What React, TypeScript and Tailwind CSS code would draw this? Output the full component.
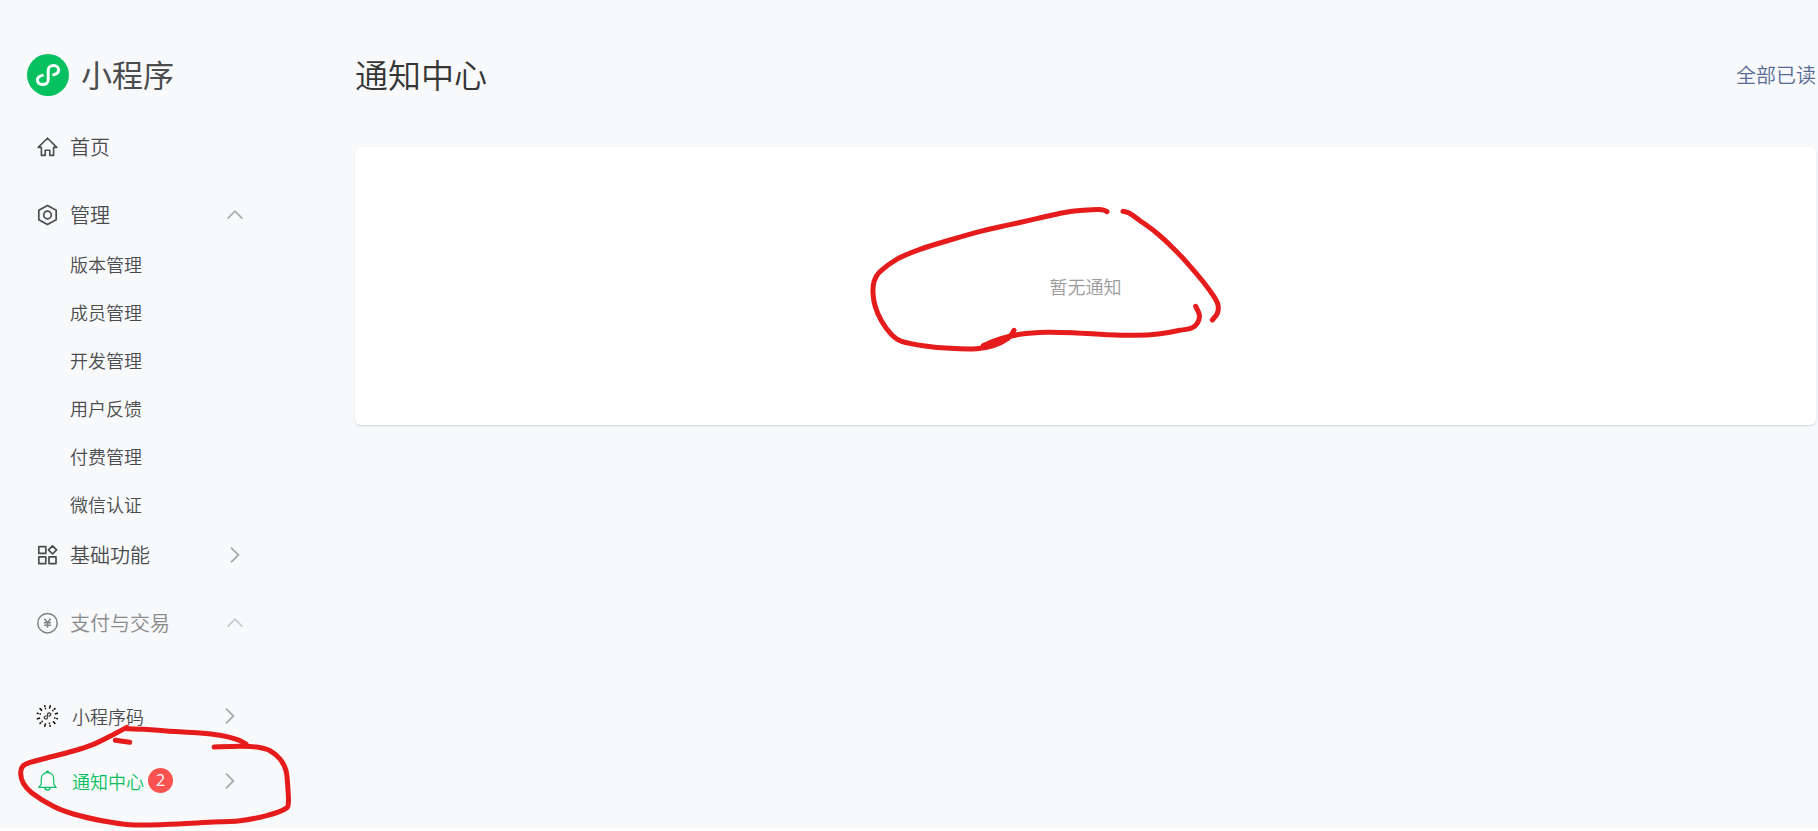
import React from 'react';

const subItems = ['版本管理', '成员管理', '开发管理', '用户反馈', '付费管理', '微信认证'];

type Point = [number, number];

// Smooth curve through the given points
const smoothPath = (points: Point[]) => {
    let d = `M${points[0][0]} ${points[0][1]}`;
    for (let i = 0; i < points.length - 1; i++) {
        const p0 = points[i - 1] || points[i];
        const p1 = points[i];
        const p2 = points[i + 1];
        const p3 = points[i + 2] || p2;
        d += `C${p1[0] + (p2[0] - p0[0]) / 6} ${p1[1] + (p2[1] - p0[1]) / 6} ${p2[0] - (p3[0] - p1[0]) / 6} ${p2[1] - (p3[1] - p1[1]) / 6} ${p2[0]} ${p2[1]}`;
    }
    return d;
};

const noticeStrokes: Point[][] = [
    [[771, 65], [755, 59], [700, 61], [640, 68], [560, 86], [480, 104], [400, 122], [300, 150], [210, 178], [140, 208], [88, 247], [72, 275], [69, 310], [76, 350], [95, 394], [125, 434], [155, 454], [225, 468], [300, 475], [380, 476], [430, 467], [475, 444], [492, 421]],
    [[400, 467], [450, 447], [510, 433], [590, 427], [680, 429], [770, 434], [860, 436], [930, 431], [990, 421], [1025, 414], [1043, 398], [1048, 375], [1037, 349]],
    [[819, 64], [837, 69], [870, 92], [920, 129], [965, 170], [1010, 217], [1060, 276], [1092, 320], [1104, 345], [1102, 370], [1087, 390]],
];

const entryStrokes: Point[][] = [
    [[738, 672], [710, 658], [660, 646], [600, 639], [500, 633], [430, 628], [380, 626]],
    [[380, 622], [330, 649], [280, 673], [220, 693], [140, 714], [88, 728], [68, 739], [62, 760], [70, 790], [95, 818], [160, 859], [220, 882], [310, 903], [390, 914], [480, 914], [600, 908], [720, 902], [800, 887], [855, 867], [865, 850], [864, 810], [858, 752], [840, 717], [810, 692], [770, 681], [720, 679], [642, 681]],
    [[346, 661], [389, 667]],
];

const Chevron: React.FC<{ up?: boolean; className?: string }> = ({ up, className = '' }) => (
    <svg className={`w-4 h-4 ml-auto ${className}`} viewBox="0 0 16 16" fill="none" stroke="#a9abad" strokeWidth={1.8} aria-hidden="true">
        {up ? <path d="M0.6 11.6L8 4.2L15.4 11.6" /> : <path d="M4 0.6L11.4 8L4 15.4" />}
    </svg>
);

const Logo: React.FC = () => (
    <svg className="w-[42px] h-[42px]" viewBox="0 0 42 42" fill="none" aria-hidden="true">
        <circle cx="21" cy="21" r="21" fill="#07c160" />
        <path d="M26.7 20.7C29.6 20.1 31.6 18.5 31.6 16.1C31.6 13.5 29.4 11.6 26.6 11.6C23.6 11.6 21.2 13.6 21.2 16.4V25.8C21.2 28.6 18.8 30.6 15.8 30.6C12.7 30.6 10.4 28.7 10.4 26.1C10.4 23.7 12.4 22.1 15.4 21.4" stroke="#fff" strokeWidth={3} strokeLinecap="round" />
    </svg>
);

const HomeIcon: React.FC = () => (
    <svg className="w-[22px] h-[22px]" viewBox="0 0 22 22" fill="none" stroke="#4b4c4e" strokeWidth={1.6} strokeLinejoin="round" aria-hidden="true">
        <path d="M11.5 2.2L2.2 11.4H5.4V19.4H9.2V14.2H13.8V19.4H17.6V11.4H20.8Z" />
    </svg>
);

const ManageIcon: React.FC = () => (
    <svg className="w-[22px] h-[22px]" viewBox="0 0 22 22" fill="none" stroke="#4b4c4e" strokeWidth={1.7} strokeLinejoin="round" aria-hidden="true">
        <path d="M11.5 1.4L20.2 6.2V15.8L11.5 20.6L2.8 15.8V6.2Z" />
        <circle cx="11.5" cy="11" r="3.8" />
    </svg>
);

const BasicIcon: React.FC = () => (
    <svg className="w-[22px] h-[22px]" viewBox="0 0 22 22" fill="none" stroke="#4b4c4e" strokeWidth={1.7} strokeLinejoin="round" aria-hidden="true">
        <rect x="2.8" y="2.6" width="7" height="6.8" />
        <rect x="2.8" y="12.8" width="7" height="6.8" />
        <rect x="13" y="12.8" width="7" height="6.8" />
        <path d="M16.5 1.8L20.6 5.9L16.5 10L12.4 5.9Z" />
    </svg>
);

const PayIcon: React.FC = () => (
    <svg className="w-[22px] h-[22px]" viewBox="0 0 22 22" fill="none" stroke="#808183" strokeWidth={1.5} aria-hidden="true">
        <circle cx="11.5" cy="11.2" r="9.7" />
        <path d="M8.4 6.8L11.5 10.8L14.6 6.8M11.5 10.8V15.8M8 10.7H15M8 13.2H15" />
    </svg>
);

const CodeIcon: React.FC = () => (
    <svg className="w-[22px] h-[22px]" viewBox="0 0 22 22" fill="none" stroke="#111" strokeWidth={1.6} strokeLinecap="round" aria-hidden="true">
        {[15, 45, 75, 105, 135, 165, 195, 225, 255, 285, 315, 345].map((deg, i) => (
            <path key={deg} d={i % 2 ? 'M11.5 0.5V1.2M11.5 3.4V3.5' : 'M11.5 0.5V2.6'} transform={`rotate(${deg} 11.5 11)`} />
        ))}
        <path d="M13 11.2C14.1 10.9 14.8 10.3 14.8 9.5C14.8 8.6 14.1 8 13.2 8C12.2 8 11.5 8.7 11.5 9.6V12.4C11.5 13.3 10.8 14 9.8 14C8.9 14 8.2 13.4 8.2 12.5C8.2 11.7 8.9 11.1 10 10.8" stroke="#444" strokeWidth={1.3} />
    </svg>
);

const BellIcon: React.FC = () => (
    <svg className="w-[22px] h-[22px]" viewBox="0 0 22 22" fill="none" stroke="#07c160" strokeWidth={1.2} strokeLinejoin="round" aria-hidden="true">
        <path d="M2.8 17.4H20.2L17.8 14.4V9.2C17.8 5.2 15.2 2.6 11.5 2.6C7.8 2.6 5.2 5.2 5.2 9.2V14.4Z" />
        <path d="M9 18C9.2 19.2 10.2 20 11.5 20C12.8 20 13.8 19.2 14 18M10.4 2.4C10.4 1 12.6 1 12.6 2.4" strokeWidth={1.5} />
    </svg>
);

const navRow = 'flex items-center w-full h-[52px] pl-9 text-xl cursor-pointer';
const footRow = 'flex items-center w-full h-[65px] pl-9 text-lg cursor-pointer';

const Sidebar: React.FC = () => (
    <aside className="w-[355px] shrink-0">
        <div className="flex items-center gap-3 pl-[27px] pt-[54px]">
            <Logo />
            <span className="text-[31px] leading-[40px] pb-[2px] font-normal text-[#4b4c4e]">小程序</span>
        </div>
        <nav className="w-[243px] mt-[25px] text-[#4b4c4e]">
            <button type="button" className={navRow}>
                <HomeIcon />
                <span className="ml-3">首页</span>
            </button>
            <button type="button" className={`${navRow} mt-4`}>
                <ManageIcon />
                <span className="ml-3">管理</span>
                <Chevron up />
            </button>
            <ul>
                {subItems.map(item => (
                    <li key={item}>
                        <a href="#" className="block pl-[70px] h-12 text-lg leading-[46px]">{item}</a>
                    </li>
                ))}
            </ul>
            <button type="button" className={navRow}>
                <BasicIcon />
                <span className="ml-3">基础功能</span>
                <Chevron />
            </button>
            <button type="button" className={`${navRow} mt-4 text-[#8a8b8d]`}>
                <PayIcon />
                <span className="ml-3">支付与交易</span>
                <Chevron up className="opacity-60" />
            </button>
        </nav>
        <div className="w-[238px] mt-[34px] text-[#4b4c4e]">
            <button type="button" className={footRow}>
                <CodeIcon />
                <span className="ml-[14px]">小程序码</span>
                <Chevron />
            </button>
            <button type="button" className={`${footRow} text-[#07c160]`}>
                <BellIcon />
                <span className="ml-[14px]">通知中心</span>
                <span className="w-[25px] h-[25px] ml-1 rounded-full bg-[#fa5151] text-white font-['Open_Sans',sans-serif] font-normal text-base leading-[25px] text-center">2</span>
                <Chevron />
            </button>
        </div>
    </aside>
);

// Red pen strokes drawn over the empty notice
const NoticeMark: React.FC = () => (
    <svg className="absolute left-1/2 top-1/2 w-[400px] h-[180px] -ml-[236px] -mt-[96px] pointer-events-none" viewBox="0 0 1200 540" fill="none" stroke="#e61c1c" strokeWidth={15} strokeLinecap="round" strokeLinejoin="round" aria-hidden="true">
        {noticeStrokes.map((points, i) => (
            <path key={i} d={smoothPath(points)} />
        ))}
        <path d="M410 470C430 466 450 459 472 446" />
    </svg>
);

// Red pen strokes drawn round the active entry
const EntryMark: React.FC = () => (
    <svg className="absolute left-0 top-[720px] w-[300px] h-[111px] pointer-events-none" viewBox="0 600 900 333" fill="none" stroke="#e61c1c" strokeWidth={15} strokeLinecap="round" strokeLinejoin="round" aria-hidden="true">
        {entryStrokes.map((points, i) => (
            <path key={i} d={smoothPath(points)} />
        ))}
    </svg>
);

const App: React.FC = () => (
    <div className="relative flex min-h-screen bg-[#f8f9fb] border-b-3 border-white font-['Noto_Sans_CJK_SC',sans-serif] font-[350]">
        <Sidebar />
        <main className="flex-1 pt-[51px] pr-[2px]">
            <header className="flex items-center justify-between h-12">
                <h1 className="text-[33px] leading-[46px] pb-[2px] text-[#353535]">通知中心</h1>
                <a href="#" className="text-xl text-[#576b95]">全部已读</a>
            </header>
            <section className="relative flex items-center justify-center h-[278px] mt-12 rounded-md bg-white shadow-[0_1px_2px_rgba(0,0,0,0.15)]">
                <p className="text-lg text-[#9a9a9a]">暂无通知</p>
                <NoticeMark />
            </section>
        </main>
        <EntryMark />
    </div>
);

export default App;
